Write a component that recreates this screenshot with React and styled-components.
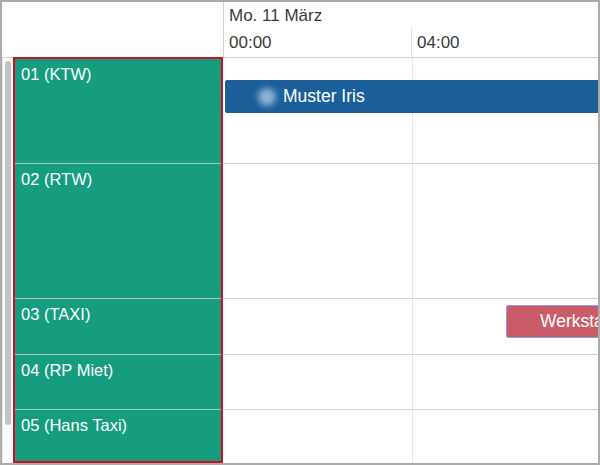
import React from "react";
import styled, { createGlobalStyle } from "styled-components";

const Global = createGlobalStyle`
  html, body { margin: 0; padding: 0; background: #fff; }
  body { font-family: "Liberation Sans", Arial, Helvetica, sans-serif; }
  * { box-sizing: border-box; }
`;

const Frame = styled.div`
  width: 600px;
  height: 465px;
  border: 2px solid #ababab;
  background: #fff;
  overflow: hidden;
  display: flex;
  flex-direction: column;
`;

const Header = styled.div`
  display: flex;
  height: 56px;
  border-bottom: 1px solid #d2d2d2;
  flex: none;
`;

const Corner = styled.div`
  width: 222px;
  border-right: 1px solid #d6d6d6;
  flex: none;
`;

const HeaderScale = styled.div`
  flex: 1;
  display: flex;
  flex-direction: column;
  color: #3a3a3a;
  font-size: 17px;
`;

const DateRow = styled.div`
  height: 26px;
  padding: 4px 0 0 5px;
  line-height: 19px;
  white-space: nowrap;
`;

const TimeRow = styled.div`
  flex: 1;
  display: flex;
`;

const TimeCell = styled.div`
  width: 188px;
  flex: none;
  padding: 5px 0 0 5px;
  line-height: 19px;
  border-right: 1px solid #e4e4e4;
`;

const Body = styled.div`
  flex: 1;
  display: flex;
  min-height: 0;
`;

const ScrollTrack = styled.div`
  width: 11px;
  flex: none;
  background: #fbfbfb;
  border-left: 1px solid #e6e6e6;
  padding: 3px 0 0 2px;
`;

const ScrollThumb = styled.div`
  width: 6px;
  height: 364px;
  border-radius: 3px;
  background: #c3c3c3;
`;

const ResourcePanel = styled.div`
  width: 210px;
  flex: none;
  margin-top: -1px;
  border: 2px solid #d0101e;
  background: #169d80;
  display: flex;
  flex-direction: column;
  height: 406px;
  overflow: hidden;
`;

const ResourceRow = styled.div`
  height: ${(p) => p.$h}px;
  flex: none;
  padding: 6px 0 0 6px;
  color: #fff;
  font-size: 16.5px;
  line-height: 19px;
  white-space: nowrap;
  border-bottom: 1px solid #a9c9c0;
  &:last-child { border-bottom: none; }
`;

const Timeline = styled.div`
  flex: 1;
  margin-left: 1px;
  display: flex;
  flex-direction: column;
  background-image: linear-gradient(
    to right,
    transparent 188px,
    #e7e7e7 188px,
    #e7e7e7 189px,
    transparent 189px
  );
`;

const LaneRow = styled.div`
  position: relative;
  height: ${(p) => p.$h}px;
  flex: none;
  border-bottom: 1px solid #d4d4d4;
  &:last-child { border-bottom: none; }
`;

const Event = styled.div`
  position: absolute;
  left: ${(p) => p.$left}px;
  top: ${(p) => p.$top}px;
  width: ${(p) => p.$width}px;
  height: 33px;
  display: flex;
  align-items: center;
  color: #fff;
  font-size: 17.5px;
  white-space: nowrap;
  overflow: hidden;
  border-radius: 2px;
  background: ${(p) => p.$bg};
  border: 1px solid ${(p) => p.$border};
  padding-left: ${(p) => p.$pad}px;
`;

const Avatar = styled.span`
  width: 18px;
  height: 18px;
  border-radius: 50%;
  background: #8fb4d8;
  filter: blur(3px);
  margin-right: 7px;
  flex: none;
`;

const resources = [
  { name: "01 (KTW)", lane: 106 },
  { name: "02 (RTW)", lane: 135 },
  { name: "03 (TAXI)", lane: 56 },
  { name: "04 (RP Miet)", lane: 55 },
  { name: "05 (Hans Taxi)", lane: 60 },
];

export default function App() {
  return (
    <>
      <Global />
      <Frame>
        <Header>
          <Corner />
          <HeaderScale>
            <DateRow>Mo. 11 März</DateRow>
            <TimeRow>
              <TimeCell>00:00</TimeCell>
              <TimeCell>04:00</TimeCell>
            </TimeRow>
          </HeaderScale>
        </Header>
        <Body>
          <ScrollTrack>
            <ScrollThumb />
          </ScrollTrack>
          <ResourcePanel>
            {resources.map((r, i) => (
              <ResourceRow key={r.name} $h={i === 0 ? r.lane - 1 : r.lane}>
                {r.name}
              </ResourceRow>
            ))}
          </ResourcePanel>
          <Timeline>
            {resources.map((r, i) => (
              <LaneRow key={r.name} $h={r.lane}>
                {i === 0 && (
                  <Event $left={1} $top={22} $width={400} $bg="#1a5f99" $border="#1a5f99" $pad={32}>
                    <Avatar />
                    Muster Iris
                  </Event>
                )}
                {i === 2 && (
                  <Event $left={282} $top={6} $width={120} $bg="#cc5b6a" $border="#8f9fe6" $pad={33}>
                    Werkstatt
                  </Event>
                )}
              </LaneRow>
            ))}
          </Timeline>
        </Body>
      </Frame>
    </>
  );
}
